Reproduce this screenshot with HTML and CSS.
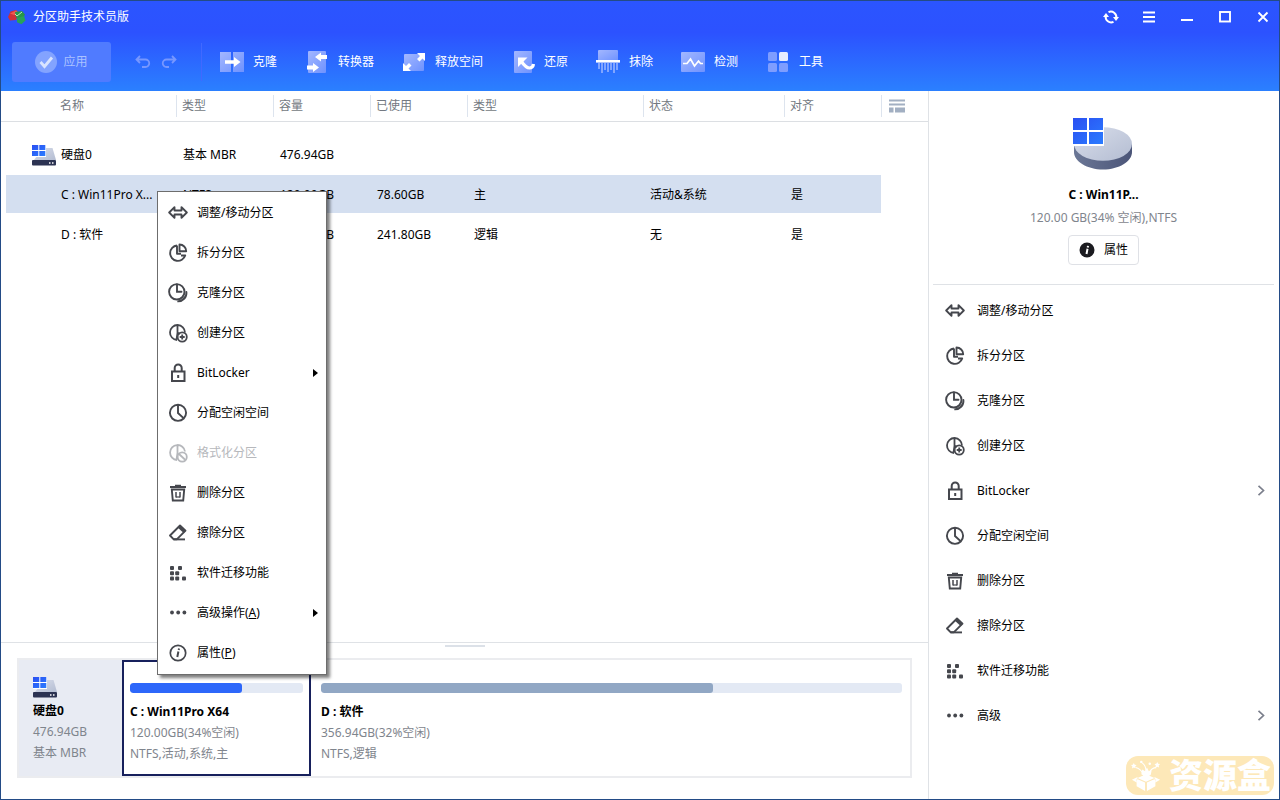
FILE: index.html
```html
<!DOCTYPE html>
<html lang="zh-CN">
<head>
<meta charset="utf-8">
<title>分区助手技术员版</title>
<link rel="stylesheet" href="styles.css">
</head>
<body>
<svg class="sprite" aria-hidden="true">
  <defs>
    <linearGradient id="plate" x1="0" y1="0" x2="1" y2="1"><stop offset="0" stop-color="#a3b7ff"/><stop offset="1" stop-color="#6e92ff"/></linearGradient>
    <linearGradient id="win" x1="0" y1="0" x2="1" y2="1"><stop offset="0" stop-color="#2a4ff2"/><stop offset="1" stop-color="#2b7cff"/></linearGradient>
    <linearGradient id="metal" x1="0" y1="0" x2="1" y2="1"><stop offset="0" stop-color="#d9deeb"/><stop offset="1" stop-color="#b4bdd2"/></linearGradient>
    <linearGradient id="rim" x1="0" y1="0" x2="1" y2="0"><stop offset="0" stop-color="#6b7796"/><stop offset="1" stop-color="#4b5578"/></linearGradient>
  </defs>
  <symbol id="i-resize" viewBox="0 0 20 20"><path d="M6.500 4.200 1.200 9.500l5.300 5.300v-3.300h7v3.300l5.300-5.300-5.300-5.300v3.300h-7z" fill="none" stroke="currentColor" stroke-width="1.900" stroke-linejoin="round"/></symbol>
  <symbol id="i-split" viewBox="0 0 20 20"><g fill="none" stroke="currentColor" stroke-width="1.900" stroke-linejoin="round"><path d="M9 2.500a7.700 7.700 0 1 0 8.200 10H13M9 2.500v8.200h4"/><path d="M11.500 1.500v6.700h6.700a6.700 6.700 0 0 0-6.700-6.700z"/></g></symbol>
  <symbol id="i-clone" viewBox="0 0 20 20"><g fill="none" stroke="currentColor" stroke-width="1.900" stroke-linecap="round"><circle cx="8.800" cy="8.800" r="7.700"/><path d="M9 1.500v7.300h4.500M18.400 9a8.500 8.500 0 0 1-9 9.400q5.500-.4 7.500-4.400"/></g></symbol>
  <symbol id="i-create" viewBox="0 0 20 20"><g fill="none" stroke="currentColor" stroke-width="1.800"><path d="M17 9.500A7.500 7.500 0 1 0 9 17M9.500 2v8l-1 7M9.500 9.500 12 11"/><circle cx="14.200" cy="14" r="4.600"/><path d="M14.200 11.500v5M11.700 14h5"/></g></symbol>
  <symbol id="i-lock" viewBox="0 0 20 20"><g fill="none" stroke="currentColor" stroke-width="2"><rect x="4" y="8.500" width="12.500" height="9.500"/><path d="M6.700 8V5a3.500 3.500 0 0 1 7 0v3M10.200 12v3"/></g></symbol>
  <symbol id="i-allocate" viewBox="0 0 20 20"><g fill="none" stroke="currentColor" stroke-width="1.900"><circle cx="10" cy="9.800" r="8.100"/><path d="M10 2v8l5.800 5.400"/></g></symbol>
  <symbol id="i-format" viewBox="0 0 20 20"><g fill="none" stroke="currentColor" stroke-width="1.800"><path d="M17 8.500A7.500 7.500 0 1 0 9 17M9.500 2v8l-1 7"/><circle cx="14.200" cy="14" r="4.600"/><path d="m11 11 6.400 6"/></g></symbol>
  <symbol id="i-trash" viewBox="0 0 20 20"><g fill="none" stroke="currentColor" stroke-width="1.900"><path d="M2 4h16M7 2.800h6M3.800 6.500 4.800 17.500h10.400l1-11z"/><path d="M8 9v5.500M12 9v5.500" stroke-width="1.500"/><path d="M8 14h4" stroke-width="1.200"/></g></symbol>
  <symbol id="i-erase" viewBox="0 0 20 20"><g fill="none" stroke="currentColor" stroke-width="1.900" stroke-linejoin="round"><path d="m12 2.500 5.500 5.200-8.500 8.500H5.500L2 12.500z"/><path d="m11 4 5.500 5.200" stroke-width="2.500"/><path d="M5.500 16.400H17"/></g></symbol>
  <symbol id="i-migrate" viewBox="0 0 20 20"><g fill="currentColor"><rect x="2" y="3" width="4" height="4" rx="1"/><rect x="10" y="3" width="4" height="4" rx="1"/><rect x="2" y="8.200" width="4" height="4" rx="1"/><rect x="7.200" y="8.200" width="4" height="4" rx="1"/><rect x="2" y="13.400" width="4" height="4" rx="1"/><rect x="7.200" y="13.400" width="4" height="4" rx="1"/><rect x="14" y="13.400" width="4" height="4" rx="1"/></g></symbol>
  <symbol id="i-more" viewBox="0 0 20 20"><g fill="currentColor"><circle cx="4" cy="9.500" r="1.900"/><circle cx="10.200" cy="9.500" r="1.900"/><circle cx="16.400" cy="9.500" r="1.900"/></g></symbol>
  <symbol id="i-info" viewBox="0 0 20 20"><circle cx="10" cy="10" r="7.700" fill="none" stroke="currentColor" stroke-width="1.700"/><path d="M10.400 8.500 9.300 14M11 5.500l-.3 1.500" stroke="currentColor" stroke-width="2" fill="none"/></symbol>
  <symbol id="i-disk" viewBox="0 0 24 21"><path d="M11 3h9.500L24 15H2z" fill="url(#metal)"/><rect y="15" width="24" height="5.500" rx="1" fill="#2c3352"/><path d="M17 18h1.500M20 18h1.500" stroke="#fff" stroke-width="1.500"/><path d="M0 0h14v12H0z" fill="#fff"/><path d="M0 0h6.300v5H0zM7.300 0h6v5h-6zM0 6h6.300v5H0zM7.300 6h6v5h-6z" fill="url(#win)"/></symbol>
  <symbol id="i-chevron" viewBox="0 0 10 14"><path d="m2.500 1.800 5 4.700-5 4.700" fill="none" stroke="#7b7f8c" stroke-width="1.700"/></symbol>
</svg>

<div class="app">
  <header class="header">
    <div class="titlebar">
      <svg class="logo" viewBox="0 0 18 16"><path d="M0 8 2.500 2.500 8 1l3 3-3 7-6 .5z" fill="#cf3038"/><path d="M2 4.500 8 1.500l3 2.500-5 2z" fill="#ef5a50"/><path d="m7 3 7-1 3 3.500-2 4-7-1z" fill="#27964a"/><path d="m9 9 7-2 1.500 4.500-4 3.800-4.500-2z" fill="#28a25a"/><path d="m7 5 2 2 5-4" fill="none" stroke="#b8ecb8"/></svg>
      <h1 class="title">分区助手技术员版</h1>
      <div class="window-buttons">
        <button class="window-button" aria-label="刷新"><svg viewBox="0 0 16 16"><g fill="none" stroke="#fff" stroke-width="2"><path d="M5.500 3.200A5.500 5.500 0 0 1 13.300 9M10.500 12.800A5.500 5.500 0 0 1 2.700 7"/></g><path d="M10 8h6l-3 4zM0 8h6L3 4z" fill="#fff"/></svg></button>
        <button class="window-button" aria-label="菜单"><svg viewBox="0 0 16 16"><path d="M2 3.500h12M2 8h12M2 12.500h12" stroke="#fff" stroke-width="1.800"/></svg></button>
        <button class="window-button" aria-label="最小化"><svg viewBox="0 0 16 16"><path d="M2 11h12" stroke="#fff" stroke-width="2"/></svg></button>
        <button class="window-button" aria-label="最大化"><svg viewBox="0 0 16 16"><rect x="3" y="3" width="10" height="9.500" fill="none" stroke="#fff" stroke-width="1.900"/></svg></button>
        <button class="window-button" aria-label="关闭"><svg viewBox="0 0 16 16"><path d="m3.500 3.500 9 9m0-9-9 9" stroke="#fff" stroke-width="1.800"/></svg></button>
      </div>
    </div>
    <nav class="toolbar">
      <button class="apply" disabled><svg viewBox="0 0 22 22"><circle cx="11" cy="11" r="11" fill="#83a3ff"/><path d="m5.500 11 4 4.500 7.500-9" fill="none" stroke="#d9e4ff" stroke-width="2.800"/></svg>应用</button>
      <div class="history">
        <button class="history-button" aria-label="撤销" disabled><svg viewBox="0 0 16 14"><path d="M2 4.500h8.500a3.500 3.500 0 0 1 0 7.500H7M5 1 1.500 4.500 5 8" fill="none" stroke="#7797ff" stroke-width="1.800"/></svg></button>
        <button class="history-button" aria-label="重做" disabled><svg viewBox="0 0 16 14"><path d="M14 4.500H5.500a3.500 3.500 0 0 0 0 7.500H8M11 1l3.500 3.500L11 8" fill="none" stroke="#7797ff" stroke-width="1.800"/></svg></button>
      </div>
      <div class="tools">
        <button class="tool"><svg viewBox="0 0 24 24"><path d="M0 2h11v20H0zM13 2h11v20H13z" fill="url(#plate)"/><path d="M5 10.300h9V7l6.500 5-6.500 5v-3.300H5z" fill="#fff"/></svg>克隆</button>
        <button class="tool"><svg viewBox="0 0 24 24"><rect x="3" y="1" width="18" height="22" rx="1" fill="url(#plate)"/><path d="M22 5h-6V2.500L10 7l6 4.500V9h6zM2 15.500h6V13l6 4.500L8 22v-2.500H2z" fill="#fff"/></svg>转换器</button>
        <button class="tool"><svg viewBox="0 0 24 24"><rect x="2" y="4" width="20" height="17" rx="1" fill="url(#plate)"/><path d="M15 3h8v8l-2.500-2.500-3 3-2.500-2.500 3-3zM1 13v8h8l-2.500-2.500 3-3L7 13l-3 3z" fill="#fff"/></svg>释放空间</button>
        <button class="tool"><svg viewBox="0 0 24 24"><rect x="3" y="1" width="18" height="22" rx="1" fill="url(#plate)"/><path d="M7 7.500h9.500L7 17z" fill="#fff"/><path d="M10 11q5 7 8.500 7 3.500 0 4-4" fill="none" stroke="#fff" stroke-width="3.200"/></svg>还原</button>
        <button class="tool"><svg viewBox="0 0 24 24"><rect x="2" y="0" width="20" height="11" rx="1" fill="url(#plate)"/><path d="M0 11.300h24" stroke="#fff" stroke-width="2.600"/><path d="M3 12v7M6 12v11M9 12v8M12 12v10M15 12v8M18 12v11M21 12v8" stroke="#afc3ff" stroke-width="1.300"/></svg>抹除</button>
        <button class="tool"><svg viewBox="0 0 24 24"><rect x="0" y="2" width="24" height="20" rx="1" fill="url(#plate)"/><path d="M2 13.500h4L9.500 9l4 7 4-5 2 2.500H22" fill="none" stroke="#fff" stroke-width="1.700"/></svg>检测</button>
        <button class="tool"><svg viewBox="0 0 24 24"><g fill="#7e9dff"><rect x="2" y="2" width="9" height="9" rx="1.500"/><rect x="2" y="13" width="9" height="9" rx="1.500"/><rect x="13" y="13" width="9" height="9" rx="1.500"/></g><rect x="13" y="2" width="9" height="9" rx="1.500" fill="#e5ecff"/></svg>工具</button>
      </div>
    </nav>
  </header>

  <div class="body">
    <main class="main">
      <section class="list">
        <table class="partitions">
          <colgroup><col class="c-name"><col class="c-small"><col class="c-small"><col class="c-small"><col class="c-kind"><col class="c-state"><col class="c-small"><col></colgroup>
          <thead>
            <tr><th>名称</th><th>类型</th><th>容量</th><th>已使用</th><th>类型</th><th>状态</th><th>对齐</th><th><button class="columns" aria-label="列设置"><svg viewBox="0 0 16 14"><path d="M0 .5h16v2H0zM0 4.500h16v2H0zM0 8.500h4.500v5H0zM6 8.500h10v5H6z" fill="#a2afc2"/></svg></button></th></tr>
          </thead>
          <tbody>
            <tr class="disk-row"><td><div class="disk-name"><svg class="disk-icon"><use href="#i-disk"/></svg>硬盘0</div></td><td>基本 MBR</td><td>476.94GB</td><td></td><td></td><td></td><td></td><td></td></tr>
            <tr class="selected"><td>C : Win11Pro X...</td><td>NTFS</td><td>120.00GB</td><td>78.60GB</td><td>主</td><td>活动&amp;系统</td><td>是</td><td></td></tr>
            <tr><td>D : 软件</td><td>NTFS</td><td>356.94GB</td><td>241.80GB</td><td>逻辑</td><td>无</td><td>是</td><td></td></tr>
          </tbody>
        </table>
      </section>
      <section class="map-panel">
        <div class="handle"></div>
        <div class="map">
          <div class="map-disk"><svg class="disk-icon"><use href="#i-disk"/></svg><strong>硬盘0</strong><span>476.94GB</span><span>基本 MBR</span></div>
          <div class="map-part active"><div class="bar"><div class="fill" style="width:65%"></div></div><strong>C : Win11Pro X64</strong><span>120.00GB(34%空闲)</span><span>NTFS,活动,系统,主</span></div>
          <div class="map-part rest"><div class="bar"><div class="fill" style="width:67.500%"></div></div><strong>D : 软件</strong><span>356.94GB(32%空闲)</span><span>NTFS,逻辑</span></div>
        </div>
      </section>
    </main>

    <aside class="side">
      <div class="summary">
        <svg class="volume" viewBox="0 0 64 52"><path d="M2 26v8c0 9.500 13 17.500 29 17.500S60 43.500 60 34v-8z" fill="url(#rim)"/><ellipse cx="31" cy="26" rx="29" ry="16.800" fill="url(#metal)"/><path d="M0 0h32v28H0z" fill="#fff"/><path d="M1 0h14v12H1zM17 0h14v12H17zM1 14h14v12H1zM17 14h14v12H17z" fill="url(#win)"/></svg>
        <strong>C : Win11P...</strong>
        <span class="muted">120.00 GB(34% 空闲),NTFS</span>
        <button class="properties"><svg viewBox="0 0 16 16"><circle cx="8" cy="8" r="7.500" fill="#1b1b20"/><path d="M8.500 6.800 7.500 12M9 3.800l-.3 1.700" stroke="#fff" stroke-width="2"/></svg>属性</button>
      </div>
      <div class="actions">
        <button class="action"><svg><use href="#i-resize"/></svg>调整/移动分区</button>
        <button class="action"><svg><use href="#i-split"/></svg>拆分分区</button>
        <button class="action"><svg><use href="#i-clone"/></svg>克隆分区</button>
        <button class="action"><svg><use href="#i-create"/></svg>创建分区</button>
        <button class="action"><svg><use href="#i-lock"/></svg>BitLocker<svg class="chevron"><use href="#i-chevron"/></svg></button>
        <button class="action"><svg><use href="#i-allocate"/></svg>分配空闲空间</button>
        <button class="action"><svg><use href="#i-trash"/></svg>删除分区</button>
        <button class="action"><svg><use href="#i-erase"/></svg>擦除分区</button>
        <button class="action"><svg><use href="#i-migrate"/></svg>软件迁移功能</button>
        <button class="action"><svg><use href="#i-more"/></svg>高级<svg class="chevron"><use href="#i-chevron"/></svg></button>
      </div>
    </aside>
  </div>

  <div class="context-menu" role="menu">
    <button class="menu-item" role="menuitem"><svg><use href="#i-resize"/></svg>调整/移动分区</button>
    <button class="menu-item" role="menuitem"><svg><use href="#i-split"/></svg>拆分分区</button>
    <button class="menu-item" role="menuitem"><svg><use href="#i-clone"/></svg>克隆分区</button>
    <button class="menu-item" role="menuitem"><svg><use href="#i-create"/></svg>创建分区</button>
    <button class="menu-item submenu" role="menuitem"><svg><use href="#i-lock"/></svg>BitLocker</button>
    <button class="menu-item" role="menuitem"><svg><use href="#i-allocate"/></svg>分配空闲空间</button>
    <button class="menu-item" role="menuitem" disabled><svg><use href="#i-format"/></svg>格式化分区</button>
    <button class="menu-item" role="menuitem"><svg><use href="#i-trash"/></svg>删除分区</button>
    <button class="menu-item" role="menuitem"><svg><use href="#i-erase"/></svg>擦除分区</button>
    <button class="menu-item" role="menuitem"><svg><use href="#i-migrate"/></svg>软件迁移功能</button>
    <button class="menu-item submenu" role="menuitem"><svg><use href="#i-more"/></svg><span>高级操作(<u>A</u>)</span></button>
    <button class="menu-item" role="menuitem"><svg><use href="#i-info"/></svg><span>属性(<u>P</u>)</span></button>
  </div>

  <div class="watermark"><svg viewBox="0 0 32 34"><g fill="#fff"><path d="m16 15 9 4-9 4-9-4zM6 20l9 4v9l-9-5zM26 20l-9 4v9l9-5zM7 18l-6 3 5 3zM25 18l6 3-5 3zM11 15l1-5 3 2 2-4 2 4 3-1-1 5-5 2z"/><path d="m3 3 1 2 2 .3-1.500 1.500.5 2L3 8 1 9l.5-2.200L0 5.300 2 5zM28 2l1 2 2 .3-1.500 1.500.5 2-2-.8-2 1 .5-2.200L25 4.300 27 4z"/><circle cx="11" cy="2" r="1.300"/><circle cx="20" cy="4" r="1.300"/></g><path d="M5 8q5 1 8 7M27 8q-5 0-8 6M12 3q4 3 4 9" fill="none" stroke="#fff" stroke-width="1.200"/></svg><span>资源盒</span></div>
</div>
</body>
</html>
```
FILE: styles.css
```css
* { box-sizing: border-box; }

body {
  margin: 0;
  font: 12px/20px "Noto Sans", "Noto Sans CJK SC", sans-serif;
  color: #000;
  background: #fff;
}

button {
  padding: 0;
  border: 0;
  background: none;
  font: inherit;
  color: inherit;
  text-align: left;
}

svg { display: block; flex: none; }
strong { font-weight: 700; }
.sprite { position: absolute; width: 0; height: 0; }

.app {
  position: relative;
  display: flex;
  flex-direction: column;
  min-height: 100vh;
  border: 1px solid #234b86;
}

/* Header */
.header {
  height: 90px;
  color: #fff;
  background: linear-gradient(#2b55ff, #2c52ff 35%, #2b80ff);
}

.titlebar { display: flex; align-items: center; height: 32px; padding-left: 7px; }
.logo { width: 18px; height: 16px; }
.title { margin: 0 0 0 7px; font-size: 12px; font-weight: 400; }
.window-buttons { display: flex; gap: 6px; margin-left: auto; }
.window-button { display: flex; justify-content: center; width: 32px; }
.window-button svg { width: 16px; height: 16px; }

.toolbar { display: flex; align-items: center; height: 58px; padding-left: 11px; }

.apply {
  display: flex;
  align-items: center;
  justify-content: center;
  gap: 6px;
  width: 99px;
  height: 40px;
  border-radius: 3px;
  background: #507bff;
  color: #abc2ff;
}
.apply svg { width: 22px; height: 22px; }

.history {
  display: flex;
  align-items: center;
  gap: 10px;
  height: 38px;
  padding: 0 24px;
  border-right: 1px solid #4169ff;
}
.history-button svg { width: 16px; height: 14px; }

.tools { display: flex; gap: 28px; margin-left: 18px; }
.tool { display: flex; align-items: center; gap: 9px; white-space: nowrap; }
.tool svg { width: 24px; height: 24px; }

/* Body columns */
.body { display: flex; flex: 1; }
.main { display: flex; flex: 1; flex-direction: column; min-width: 0; }
.list { flex: 1; }

/* Partition table */
.partitions { width: 100%; border-spacing: 0; table-layout: fixed; }
.c-name { width: 175px; }
.c-small { width: 97px; }
.c-kind { width: 176px; }
.c-state { width: 141px; }

.partitions th {
  height: 31px;
  padding: 0 0 0 6px;
  border-bottom: 1px solid #dcdfe3;
  background: linear-gradient(#dde4ee, #dde4ee) no-repeat left center / 1px 22px;
  color: #737982;
  font-weight: 400;
  text-align: left;
}
.partitions th:first-child { padding-left: 59px; background: none; }
.columns { display: block; margin-left: 2px; }
.columns svg { width: 16px; height: 14px; }

.partitions td {
  height: 40px;
  padding: 2px 0 0 7px;
  border: solid #fff;
  border-width: 1px 0;
  white-space: nowrap;
}
.partitions td:first-child { padding-left: 55px; border-left-width: 5px; }
.partitions .disk-row td { height: 52px; padding-top: 14px; }
.partitions .disk-row td:first-child { padding-left: 26px; }
.disk-name { display: flex; align-items: center; gap: 5px; }
.selected td:not(:last-child) { background: #d4dff0; }
.disk-icon { width: 24px; height: 21px; }

/* Disk map */
.map-panel { padding: 0 16px 21px; border-top: 1px solid #dfe2e6; }
.handle { width: 40px; height: 2px; margin: 2px auto 11px; background: #dce1e8; }
.map { display: flex; height: 120px; border: 2px solid #ebecef; }
.map-disk, .map-part { display: flex; flex-direction: column; color: #7f858d; line-height: 21px; white-space: nowrap; }
.map-disk strong, .map-part strong { color: #000; }
.map-disk { flex: 0 0 103px; padding: 17px 0 0 14px; background: #e8ebf3; }
.map-disk .disk-icon { margin-bottom: 2px; }
.map-part { padding: 21px 6px 0; border: 2px solid transparent; }
.map-part.active { flex: 0 1 189px; border-color: #17205c; }
.map-part.rest { flex: 1; padding-left: 8px; }
.bar { height: 10px; margin-bottom: 8px; overflow: hidden; border-radius: 3px; background: #e3e9f4; }
.fill { height: 10px; border-radius: 3px; background: #91a7c4; }
.active .fill { background: #2d67fa; }

/* Side panel */
.side { flex: 0 0 351px; padding: 0 5px 0 4px; border-left: 1px solid #dfe2e6; }
.summary {
  display: flex;
  flex-direction: column;
  align-items: center;
  padding: 27px 0 19px;
  border-bottom: 1px solid #dfe2e6;
}
.volume { width: 64px; height: 52px; margin-bottom: 15px; }
.summary .muted { margin: 3px 0 7px; color: #7f858d; }
.properties {
  display: flex;
  align-items: center;
  gap: 9px;
  height: 30px;
  padding: 0 10px;
  border: 1px solid #dfe1e6;
  border-radius: 4px;
}
.properties svg { width: 16px; height: 16px; }

.actions { display: flex; flex-direction: column; padding-top: 3px; }
.action { display: flex; align-items: center; gap: 12px; height: 45px; padding: 0 8px 0 12px; }
.action svg, .menu-item svg { width: 20px; height: 20px; color: #45474d; }
.action .chevron { width: 10px; height: 14px; margin-left: auto; }

/* Context menu */
.context-menu {
  position: absolute;
  top: 190px;
  left: 156px;
  display: flex;
  flex-direction: column;
  width: 170px;
  padding: 1px 0;
  border: 1px solid #6d6d6d;
  background: #fff;
  box-shadow: 3px 3px 3px rgba(0, 0, 0, .5);
}
.menu-item { display: flex; align-items: center; gap: 9px; height: 40px; padding: 0 8px 0 10px; }
.menu-item:disabled, .menu-item:disabled svg { color: #b6b8bc; }
.submenu::after {
  content: "";
  margin-left: auto;
  border: 4px solid transparent;
  border-right-width: 0;
  border-left-width: 5px;
  border-left-color: #000;
}

/* Watermark */
.watermark {
  position: absolute;
  right: 5px;
  bottom: 4px;
  display: flex;
  align-items: center;
  gap: 8px;
  height: 39px;
  padding: 0 3px 0 5px;
  border-radius: 12px;
  background: #fde8b8;
  color: #fff;
  font-size: 34px;
  font-weight: 900;
  line-height: 39px;
}
.watermark svg { width: 30px; height: 34px; }
```
